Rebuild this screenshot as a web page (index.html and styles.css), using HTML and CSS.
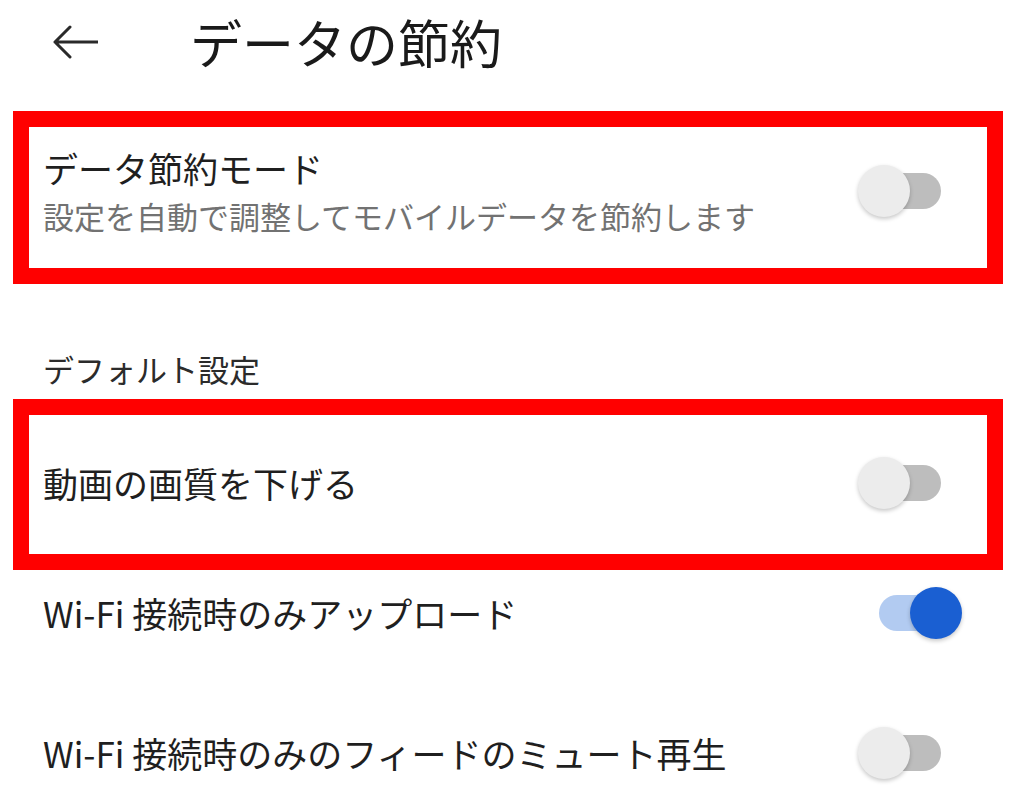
FILE: index.html
```html
<!DOCTYPE html>
<html lang="ja">
<head>
    <meta charset="UTF-8">
    <meta name="viewport" content="width=device-width, initial-scale=1.0">
    <title>データの節約</title>
    <link rel="stylesheet" href="styles.css">
</head>
<body>
    <div class="header">
        <svg class="back" width="46" height="36" viewBox="0 0 46 36">
            <path d="M46 18 H3 M18 3 L3 18 L18 33" fill="none" stroke="#2a2a2a" stroke-width="3" stroke-linecap="round" stroke-linejoin="round"/>
        </svg>
        <h1>データの節約</h1>
    </div>

    <div class="group marked">
        <div class="row row-double">
            <div class="row-text">
                <div class="row-title">データ節約モード</div>
                <div class="row-sub">設定を自動で調整してモバイルデータを節約します</div>
            </div>
            <div class="switch"><span class="track"></span><span class="knob"></span></div>
        </div>
    </div>

    <div class="section-label">デフォルト設定</div>

    <div class="group marked">
        <div class="row row-single">
            <div class="row-title">動画の画質を下げる</div>
            <div class="switch"><span class="track"></span><span class="knob"></span></div>
        </div>
    </div>

    <div class="group plain">
        <div class="row">
            <div class="row-title">Wi-Fi 接続時のみアップロード</div>
            <div class="switch on"><span class="track"></span><span class="knob"></span></div>
        </div>
    </div>

    <div class="group plain">
        <div class="row">
            <div class="row-title">Wi-Fi 接続時のみのフィードのミュート再生</div>
            <div class="switch"><span class="track"></span><span class="knob"></span></div>
        </div>
    </div>
</body>
</html>
```

FILE: styles.css
```css
body {
    margin: 0;
    background-color: #fff;
    font-family: "Noto Sans CJK JP", "Noto Sans", sans-serif;
    color: #1f1f1f;
    overflow: hidden;
}
.header {
    display: flex;
    align-items: center;
    height: 84px;
    padding-left: 52px;
    margin-bottom: 27px;
}
.back {
    display: block;
    flex-shrink: 0;
}
h1 {
    margin: 0 0 0 92px;
    font-size: 52px;
    font-weight: 400;
    line-height: 60px;
    color: #1a1a1a;
}
.group {
    margin-left: 13px;
    width: 990px;
    box-sizing: border-box;
    border: 16px solid transparent;
}
.group.marked {
    border-color: #ff0000;
}
.group.plain {
    border-top: none;
    border-bottom: none;
}
.row {
    display: flex;
    align-items: center;
    justify-content: space-between;
    padding: 0 25px 0 14px;
}
.row-double {
    padding-top: 19px;
    padding-bottom: 32px;
}
.row-single {
    height: 135px;
    padding-bottom: 4px;
}
.group.plain .row {
    padding-top: 17px;
    padding-bottom: 71px;
}
.row-title {
    font-size: 35px;
    line-height: 44px;
    color: #1f1f1f;
}
.group.plain .row-title {
    line-height: 48px;
}
.row-sub {
    margin-top: 6px;
    font-size: 31px;
    line-height: 40px;
    color: #727272;
}
.section-label {
    margin: 65px 0 10px 43px;
    font-size: 31px;
    line-height: 40px;
    color: #2b2b2b;
}
.switch {
    position: relative;
    width: 104px;
    height: 52px;
    flex-shrink: 0;
}
.track {
    position: absolute;
    left: 21px;
    top: 8px;
    width: 62px;
    height: 36px;
    border-radius: 18px;
    background-color: #bdbdbd;
}
.knob {
    position: absolute;
    left: 0;
    top: 0;
    width: 52px;
    height: 52px;
    border-radius: 50%;
    background-color: #ececec;
    box-shadow: 0 2px 4px rgba(0, 0, 0, 0.22);
}
.switch.on .track {
    background-color: #b2cbf1;
}
.switch.on .knob {
    left: 52px;
    background-color: #1a5fd2;
}
```
